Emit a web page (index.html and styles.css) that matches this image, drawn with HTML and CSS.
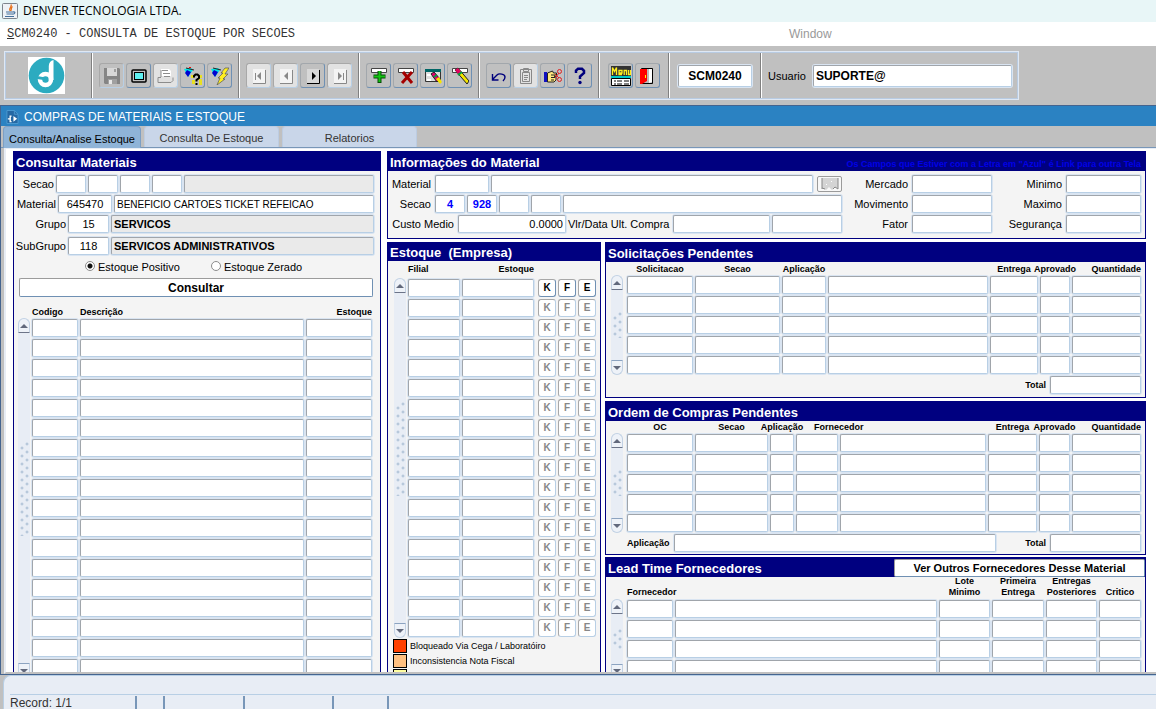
FILE: index.html
```html
<!DOCTYPE html>
<html lang="pt-BR">
<head>
<meta charset="utf-8">
<title>DENVER TECNOLOGIA LTDA.</title>
<link rel="stylesheet" href="styles.css">
<script src="grid.js" defer></script>
</head>
<body>
<header class="titlebar">
  <svg class="java-icon" viewBox="0 0 16 16" aria-hidden="true"><rect x=".5" y=".5" width="15" height="15" rx="1" fill="#eef2f6" stroke="#7d858d"/><path d="M8.800 1.500C11 3.500 6 4.500 8 8M10.500 3.500C8.500 5 10 6 8.800 8" stroke="#e8731c" stroke-width="1.300" fill="none"/><path d="M4 9h7M4.500 11h6M3 13.500h9M11 9c3-.5 2 2-.5 2.200" stroke="#44709c" stroke-width="1.200" fill="none"/></svg>
  <span>DENVER TECNOLOGIA LTDA.</span>
</header>
<nav class="menubar">
  <button class="menu-program"><u>S</u>CM0240 - CONSULTA DE ESTOQUE POR SECOES</button>
  <button class="menu-window" disabled>Window</button>
</nav>

<div class="toolbar">
  <div class="tool-group tool-logo">
    <svg viewBox="0 0 37 37" role="img" aria-label="Denver"><rect width="37" height="37" fill="#fff"/><circle cx="18.500" cy="18.500" r="17.800" fill="#2cabc0"/><circle cx="17.500" cy="22.500" r="5.500" fill="none" stroke="#fff" stroke-width="4.500"/><path d="M25.500 3Q21 4 20.800 9V23h4.700z" fill="#fff"/><path d="M9 19l8.500 1.500-2 2.500-6.500-1z" fill="#2cabc0"/></svg>
  </div>
  <div class="tool-group">
    <button class="tool" aria-label="Salvar" disabled><svg viewBox="0 0 18 18"><path d="M1 1h15l1 1v15H2l-1-1z" fill="#858585"/><path d="M4 1h10v8H4z" fill="#d8d8d8"/><path d="M11 2h2v3h-2zM5 12h9v5H5z" fill="#a0a0a0"/><path d="M6 13h3v4H6z" fill="#e8e8e8"/></svg></button>
    <button class="tool" aria-label="Tela"><svg viewBox="0 0 18 18"><rect x="2" y="3" width="14" height="12" rx="1" fill="#c0c0c0" stroke="#000" stroke-width="1.500"/><rect x="4.500" y="5.500" width="9" height="7" fill="#5ff0f0" stroke="#000"/></svg></button>
    <button class="tool tool--light" aria-label="Imprimir" disabled><svg viewBox="0 0 18 18"><path d="M4 2h8l2 2v5H4z" fill="#fff"/><path d="M5 3.500h6M6 6.500h7M7 9.500h6M2 15.500h12M4 10.500H1v5h13l2-2v-3M4 3v7" fill="none" stroke="#8c8c8c"/><path d="M2 11h11v4H2z" fill="#e0e0e0"/></svg></button>
    <button class="tool" aria-label="Entrar consulta"><svg viewBox="0 0 18 18"><path d="M0 2l7-1 2 2-5 7z" fill="#00e5e5"/><path d="M3 3l4 2-3 5-3-4z" fill="#0000d0"/><path d="M2 1l8 2" stroke="#222"/><path d="M5 0h2v1H5z" fill="red"/><path d="M7 8h3v3H7zM15 8h3v3h-3zM8 13h3v4H8zM15 12h3v6h-3z" fill="#e8e020"/><path d="M10 10.500V9l1.500-1.500h2L15 9v2l-2.500 2v1.500M12.500 16v2" fill="none" stroke="#000" stroke-width="2"/></svg></button>
    <button class="tool" aria-label="Executar consulta"><svg viewBox="0 0 18 18"><path d="M0 2l7-1 2 2-5 7z" fill="#00e5e5"/><path d="M3 3l4 2-3 5-3-4z" fill="#0000d0"/><path d="M2 1l8 2" stroke="#222"/><path d="M14 1h4l-4 6h3l-5 5h2l-8 6 3-7H7l5-5h-2z" fill="#ffee20" stroke="#555" stroke-width=".7"/></svg></button>
  </div>
  <div class="tool-group">
    <button class="tool tool--light" aria-label="Primeiro" disabled><svg viewBox="0 0 18 18"><path d="M3 2h12v14H3z" fill="#f4f4f4"/><path d="M3 16.500h12.500V3M5.500 6v7" fill="none" stroke="#888"/><path d="M11 5v8L7 9z" fill="#888"/></svg></button>
    <button class="tool tool--light" aria-label="Anterior" disabled><svg viewBox="0 0 18 18"><path d="M3 2h12v14H3z" fill="#f4f4f4"/><path d="M3 16.500h12.500V3" fill="none" stroke="#888"/><path d="M11 5v8L7 9z" fill="#888"/></svg></button>
    <button class="tool" aria-label="Seguinte"><svg viewBox="0 0 18 18"><path d="M3 2h12v14H3z" fill="#d8d8d8"/><path d="M3 16.500h12.500V3" fill="none" stroke="#000"/><path d="M8 5v8l4-4z" fill="#000"/></svg></button>
    <button class="tool tool--light" aria-label="Ultimo" disabled><svg viewBox="0 0 18 18"><path d="M3 2h12v14H3z" fill="#f4f4f4"/><path d="M3 16.500h12.500V3M12.500 6v7" fill="none" stroke="#888"/><path d="M7 5v8l4-4z" fill="#888"/></svg></button>
  </div>
  <div class="tool-group">
    <button class="tool" aria-label="Inserir registro"><svg viewBox="0 0 18 18"><path d="M1.500 1.500h15v4h-15z" fill="#fff" stroke="#444"/><path d="M9.500 4v12M3.500 9.500h12" stroke="#074d07" stroke-width="4"/><path d="M9.500 4v11M4 9.500h11" stroke="#12c412" stroke-width="2"/></svg></button>
    <button class="tool" aria-label="Excluir registro"><svg viewBox="0 0 18 18"><path d="M1.500 1.500h15v4h-15z" fill="#fff" stroke="#444"/><path d="M6 5l9 11M15 5L5 16" stroke="#a40000" stroke-width="3"/></svg></button>
    <button class="tool" aria-label="Limpar bloco"><svg viewBox="0 0 18 18"><path d="M1.500 2.500h15v12h-15z" fill="#ddd" stroke="#333"/><path d="M1 2h16v3H1z" fill="#066"/><path d="M3 8h5M3 13h4" stroke="#fff" stroke-width="2"/><path d="M7 7l3-2 6 7-3 3z" fill="#e00070" stroke="#222"/><path d="M12 12l3-2 3 5-2 2z" fill="#f5e500"/><path d="M10 10l3-2" stroke="#00a040" stroke-width="2"/></svg></button>
    <button class="tool" aria-label="Limpar registro"><svg viewBox="0 0 18 18"><path d="M1.500 1.500h15v4h-15z" fill="#fff" stroke="#444"/><path d="M4 3l3-2 11 13-2 3z" fill="#f5e500" stroke="#222"/><path d="M4 3l3-2 3 4-3 2z" fill="#e00060"/><path d="M7 8l4-3" stroke="#00a040" stroke-width="2"/></svg></button>
  </div>
  <div class="tool-group">
    <button class="tool" aria-label="Desfazer"><svg viewBox="0 0 18 18"><path d="M2.500 7v6h6M3 12l4-4c2-2 8-1 8 2 0 2-1 3-2 4" fill="none" stroke="#00007c" stroke-width="1.400"/></svg></button>
    <button class="tool tool--light" aria-label="Colar" disabled><svg viewBox="0 0 18 18"><path d="M3.500 2.500h11v14h-11zM5.500 5.500h7v9h-7zM6.500 1.500h5v3h-5zM7 8.500h4M7 10.500h4M7 12.500h3" fill="none" stroke="#888"/></svg></button>
    <button class="tool" aria-label="Recortar"><svg viewBox="0 0 18 18"><path d="M0 5h3v10H0z" fill="#1010c0"/><path d="M3.500 6l5-2 1 2h3v3H10l2 1v3l-2 2H3.500z" fill="#ffe880" stroke="#222"/><path d="M7 8h4M7 10.500h4M7 13h3" stroke="#222"/><circle cx="15.500" cy="4.500" r="2" fill="none" stroke="#e02020"/><circle cx="15.500" cy="12.500" r="2" fill="none" stroke="#e02020"/><path d="M11 11l4-5M11 7l4 4" stroke="#e02020"/></svg></button>
    <button class="tool" aria-label="Ajuda"><svg viewBox="0 0 18 18"><path d="M5 6V3.500L7 1.800h4l2 2V6L9 9.500V12" fill="none" stroke="#00007c" stroke-width="2.500"/><circle cx="9" cy="15.500" r="1.700" fill="#00007c"/></svg></button>
  </div>
  <div class="tool-group tool-exit">
    <button class="tool tool--menu" aria-label="Menu"><svg viewBox="0 0 20 20"><path d="M0 0h20v10H0z" fill="#333"/><path d="M1.500 9V1.500l2 4 2-4V9M8 7h3V4.500H8v4h3M13.200 9V4.500h2.300V9M17.500 4v4.500h2V4" fill="none" stroke="#ffee20" stroke-width="1.300"/><path d="M0 10h20v2H0z" fill="#00c8c8"/><path d="M.5 12.500h19v7H.5z" fill="#fff" stroke="#000"/><path d="M3 15h2m1 0h5m2 0h5M3 18h2m1 0h5m2 0h5" stroke="#000"/></svg></button>
    <button class="tool" aria-label="Sair"><svg viewBox="0 0 18 18"><path d="M2.500 1.500h11v15h-11z" fill="#bbb" stroke="#000"/><path d="M10 2h3v13l-3 1z" fill="#fff"/><path d="M1 2h7v12l-5 3H1z" fill="red"/><path d="M6 8h1v3H6z" fill="#ff0"/></svg></button>
  </div>
  <div class="tool-group tool-code"><input class="field tool-field tool-program" value="SCM0240" aria-label="Programa"></div>
  <div class="tool-group tool-user"><label for="usuario">Usuario</label><input id="usuario" class="field tool-field tool-username" value="SUPORTE@"></div>
</div>

<main class="window">
  <h1 class="window-title"><svg viewBox="0 0 14 16" aria-hidden="true"><path d="M1 1h8l4 4v10H1z" fill="#2468a4" stroke="#4d9ad2"/><path d="M9 1v4h4" fill="none" stroke="#4d9ad2"/><path d="M6 7H4.500v6H6M2 10h2" stroke="#fff" stroke-width="1.500" fill="none"/><path d="M8 7v6l4-3z" fill="#fff"/></svg>COMPRAS DE MATERIAIS E ESTOQUE</h1>
  <div class="tabs" role="tablist">
    <button class="tab tab--active" role="tab" aria-selected="true">Consulta/Analise Estoque</button>
    <button class="tab" role="tab">Consulta De Estoque</button>
    <button class="tab" role="tab">Relatorios</button>
  </div>
  <div class="workspace">

    <section class="panel search">
      <h2 class="panel-title">Consultar Materiais</h2>
      <form class="search-form">
        <div class="row"><label class="label w-42" for="s1">Secao</label><input id="s1" class="field w-30"><input class="field w-30" aria-label="Secao 2"><input class="field w-30" aria-label="Secao 3"><input class="field w-30" aria-label="Secao 4"><input class="field grow locked" aria-label="Nome da secao" readonly></div>
        <div class="row"><label class="label w-44" for="mat">Material</label><input id="mat" class="field w-54 center" value="645470"><input class="field grow small" aria-label="Nome do material" value="BENEFICIO CARTOES TICKET REFEICAO"></div>
        <div class="row"><label class="label w-54" for="grp">Grupo</label><input id="grp" class="field w-41 center" value="15"><input class="field grow locked" aria-label="Nome do grupo" value="SERVICOS" readonly></div>
        <div class="row row--sub"><label class="label w-54" for="sub">SubGrupo</label><input id="sub" class="field w-41 center" value="118"><input class="field grow locked" aria-label="Nome do subgrupo" value="SERVICOS ADMINISTRATIVOS" readonly></div>
        <div class="choices">
          <label><input type="radio" name="saldo" checked>Estoque Positivo</label>
          <label><input type="radio" name="saldo">Estoque Zerado</label>
        </div>
        <button type="button" class="action consult">Consultar</button>
      </form>
      <div class="listing">
        <div class="scroll"><button aria-label="Subir"></button><i class="grip"></i><button class="down" aria-label="Descer"></button></div>
        <table class="records" data-rows="18">
          <colgroup><col class="w-46"><col><col class="w-66"></colgroup>
          <thead><tr><th class="left">Codigo</th><th class="left">Descrição</th><th class="right">Estoque</th></tr></thead>
          <tbody><tr><td><input class="field" aria-label="Codigo"></td><td><input class="field" aria-label="Descrição"></td><td><input class="field" aria-label="Estoque"></td></tr></tbody>
        </table>
      </div>
    </section>

    <div class="details">
      <section class="panel info">
        <div class="panel-title"><h2>Informações do Material</h2><span class="hint">Os Campos que Estiver com a Letra em "Azul" é Link para outra Tela</span></div>
        <div class="info-body">
          <div class="info-main">
            <div class="row"><label class="label w-47" for="im">Material</label><input id="im" class="field w-54"><input class="field grow" aria-label="Descrição do material"><button class="photo" aria-label="Foto"><svg viewBox="0 0 18 12"><path d="M1 0h16v11l-3-2-3 3-3-3-3 3-4-2z" fill="#d4d4d4"/><path d="M1 0v11M17 0v11l-3-2-2 2M1 10l3 1" fill="none" stroke="#888"/><path d="M10 3h1v1h-1zM5 6h1v1H5z" fill="#fff"/></svg></button></div>
            <div class="row"><label class="label w-47" for="is">Secao</label><input id="is" class="field w-30 link" value="4"><input class="field w-30 link" aria-label="Secao 2" value="928"><input class="field w-30" aria-label="Secao 3"><input class="field w-30" aria-label="Secao 4"><input class="field grow" aria-label="Nome da secao"></div>
            <div class="row"><label class="label w-70" for="cm">Custo Medio</label><input id="cm" class="field w-108 num" value="0.0000"><label class="label w-105" for="vl">Vlr/Data Ult. Compra</label><input id="vl" class="field grow"><input class="field w-70" aria-label="Data da ultima compra"></div>
          </div>
          <div class="info-side">
            <label class="label" for="me">Mercado</label><input id="me" class="field"><label class="label" for="mi">Minimo</label><input id="mi" class="field">
            <label class="label" for="mo">Movimento</label><input id="mo" class="field"><label class="label" for="ma">Maximo</label><input id="ma" class="field">
            <label class="label" for="fa">Fator</label><input id="fa" class="field"><label class="label" for="se">Segurança</label><input id="se" class="field">
          </div>
        </div>
      </section>

      <section class="panel stock">
        <h2 class="panel-title">Estoque&nbsp; (Empresa)</h2>
        <div class="listing">
          <div class="scroll"><button aria-label="Subir"></button><i class="grip"></i><button class="down" aria-label="Descer"></button></div>
          <table class="records" data-rows="18">
            <colgroup><col class="w-52"><col><col class="w-20"><col class="w-18"><col class="w-18"></colgroup>
            <thead><tr><th class="left">Filial</th><th class="right">Estoque</th><th></th><th></th><th></th></tr></thead>
            <tbody><tr><td><input class="field" aria-label="Filial"></td><td><input class="field" aria-label="Estoque"></td><td class="spaced"><button class="key">K</button></td><td><button class="key">F</button></td><td><button class="key">E</button></td></tr></tbody>
          </table>
        </div>
        <ul class="legend">
          <li><i class="swatch red"></i>Bloqueado Via Cega / Laboratóiro</li>
          <li><i class="swatch orange"></i>Inconsistencia Nota Fiscal</li>
          <li><i class="swatch yellow"></i></li>
        </ul>
      </section>

      <div class="pending">
        <section class="panel requests">
          <h2 class="panel-title">Solicitações Pendentes</h2>
          <div class="listing">
            <div class="scroll"><button aria-label="Subir"></button><i class="grip"></i><button class="down" aria-label="Descer"></button></div>
            <table class="records" data-rows="5">
              <colgroup><col class="w-66"><col class="w-85"><col class="w-44"><col><col class="w-48"><col class="w-30"><col class="w-69"></colgroup>
              <thead><tr><th>Solicitacao</th><th>Secao</th><th><span>Aplicação</span></th><th></th><th>Entrega</th><th><span>Aprovado</span></th><th class="right">Quantidade</th></tr></thead>
              <tbody><tr><td><input class="field" aria-label="Solicitacao"></td><td><input class="field" aria-label="Secao"></td><td><input class="field" aria-label="Aplicação"></td><td><input class="field" aria-label="Nome da aplicação"></td><td><input class="field" aria-label="Entrega"></td><td><input class="field" aria-label="Aprovado"></td><td><input class="field" aria-label="Quantidade"></td></tr></tbody>
            </table>
          </div>
          <div class="totals"><label for="t1">Total</label><input id="t1" class="field w-91"></div>
        </section>

        <section class="panel orders">
          <h2 class="panel-title">Ordem de Compras Pendentes</h2>
          <div class="listing">
            <div class="scroll"><button aria-label="Subir"></button><i class="grip"></i><button class="down" aria-label="Descer"></button></div>
            <table class="records" data-rows="5">
              <colgroup><col class="w-66"><col class="w-73"><col class="w-24"><col class="w-42"><col><col class="w-49"><col class="w-31"><col class="w-69"></colgroup>
              <thead><tr><th>OC</th><th>Secao</th><th><span>Aplicação</span></th><th class="left indent" colspan="2">Fornecedor</th><th>Entrega</th><th><span>Aprovado</span></th><th class="right">Quantidade</th></tr></thead>
              <tbody><tr><td><input class="field" aria-label="OC"></td><td><input class="field" aria-label="Secao"></td><td><input class="field" aria-label="Aplicação"></td><td><input class="field" aria-label="Fornecedor"></td><td><input class="field" aria-label="Nome do fornecedor"></td><td><input class="field" aria-label="Entrega"></td><td><input class="field" aria-label="Aprovado"></td><td><input class="field" aria-label="Quantidade"></td></tr></tbody>
            </table>
          </div>
          <div class="totals"><label for="ap">Aplicação</label><input id="ap" class="field grow"><label class="total-label" for="t2">Total</label><input id="t2" class="field w-91"></div>
        </section>

        <section class="panel lead">
          <div class="panel-title"><h2>Lead Time Fornecedores</h2><button class="action others">Ver Outros Fornecedores Desse Material</button></div>
          <div class="listing">
            <div class="scroll"><button aria-label="Subir"></button><i class="grip"></i><button class="down" aria-label="Descer"></button></div>
            <table class="records" data-rows="4">
              <colgroup><col class="w-46"><col><col class="w-51"><col class="w-52"><col class="w-51"><col class="w-42"></colgroup>
              <thead><tr><th class="left" colspan="2">Fornecedor</th><th>Lote<br>Minimo</th><th>Primeira<br>Entrega</th><th><span>Entregas<br>Posteriores</span></th><th>Critico</th></tr></thead>
              <tbody><tr><td><input class="field" aria-label="Fornecedor"></td><td><input class="field" aria-label="Nome do fornecedor"></td><td><input class="field" aria-label="Lote minimo"></td><td><input class="field" aria-label="Primeira entrega"></td><td><input class="field" aria-label="Entregas posteriores"></td><td><input class="field" aria-label="Critico"></td></tr></tbody>
            </table>
          </div>
        </section>
      </div>
    </div>
  </div>
</main>

<footer class="status">
  <div class="status-line"></div>
  <div class="status-cells"><span class="cell w-127">Record: 1/1</span><span class="cell w-28"></span><span class="cell w-80"></span><span class="cell w-89"></span><span class="cell w-55"></span></div>
</footer>
</body>
</html>
```
FILE: styles.css
```css
* { box-sizing: border-box; }

body {
  margin: 0;
  height: 100vh;
  display: flex;
  flex-direction: column;
  overflow: hidden;
  background: #c0c0c0;
  font: 11px/16px "Liberation Sans", Arial, sans-serif;
  color: #000;
}

h1, h2, ul { margin: 0; padding: 0; font: inherit; list-style: none; }
button, input { font: inherit; color: inherit; margin: 0; padding: 0; border-radius: 0; }
svg { display: block; }

/* Column and field widths */
.w-18 { width: 18px; }
.w-20 { width: 20px; }
.w-24 { width: 24px; }
.w-28 { width: 28px; }
.w-30 { width: 30px; }
.w-31 { width: 31px; }
.w-41 { width: 41px; }
.w-42 { width: 42px; }
.w-44 { width: 44px; }
.w-46 { width: 46px; }
.w-47 { width: 47px; }
.w-48 { width: 48px; }
.w-49 { width: 49px; }
.w-51 { width: 51px; }
.w-52 { width: 52px; }
.w-54 { width: 54px; }
.w-55 { width: 55px; }
.w-66 { width: 66px; }
.w-69 { width: 69px; }
.w-70 { width: 70px; }
.w-73 { width: 73px; }
.w-80 { width: 80px; }
.w-85 { width: 85px; }
.w-89 { width: 89px; }
.w-91 { width: 91px; }
.w-105 { width: 105px; }
.w-108 { width: 108px; }
.w-127 { width: 127px; }

/* Title and menu */
.titlebar {
  flex: none;
  height: 22px;
  display: flex;
  align-items: center;
  gap: 5px;
  padding-left: 2px;
  background: #e8f6f7;
  font: 12px/20px "Open Sans", "Noto Sans", sans-serif;
}
.java-icon { width: 16px; height: 16px; }
.menubar { flex: none; height: 24px; display: flex; background: #fff; }
.menubar button { border: 0; background: none; text-align: left; white-space: nowrap; }
.menu-program { flex: 0 1 789px; padding-left: 7px; font: 12px "Liberation Mono", monospace; color: #333; }
.menu-window { font-size: 12px; color: #999; }

/* Toolbar */
.toolbar {
  flex: none;
  align-self: flex-start;
  display: flex;
  height: 49px;
  margin: 5px 0 5px 4px;
  border: 1px solid #dfe8f4;
  outline: 1px solid #b8cbe2;
  outline-offset: -2px;
}
.tool-group {
  display: flex;
  align-items: center;
  gap: 2px;
  padding: 0 6px;
  border-left: 1px solid #fff;
  border-right: 1px solid #808080;
}
.tool-logo { width: 87px; justify-content: center; padding: 0 6px 0 2px; }
.tool-logo svg { width: 37px; height: 37px; }
.tool {
  width: 25px;
  height: 25px;
  display: grid;
  place-items: center;
  background: #c0c0c0;
  border: 1px solid #a2a7ac;
  border-right-color: #6f90b3;
  border-bottom-color: #6f90b3;
  border-radius: 3px;
}
.tool:disabled { border-color: #a8a8a8 #b8cfe5 #b8cfe5 #a8a8a8; }
.tool--light { background: #e2e2e2; }
.tool svg { width: 18px; height: 18px; }
.tool--menu svg { width: 20px; height: 20px; }
.tool-exit, .tool-code { padding: 0 8px; }
.tool-user { border-right: 0; gap: 7px; }

/* Fields */
.field {
  display: block;
  flex: none;
  min-width: 0;
  height: 18px;
  padding: 0 2px;
  background: #fff;
  border: 1px solid;
  border-color: #a0a5ab #b8cfe5 #b8cfe5 #a0a5ab;
  border-radius: 2px;
  box-shadow: 0 0 0 1px #d9e4f1;
}
.grow { flex: 1 1 0; }
.locked { background: #eaeaea; font-weight: bold; }
.small { font-size: 10px; }
.center, .link { text-align: center; }
.link { color: #0000ff; font-weight: bold; }
.num { text-align: right; }
.tool-field { height: 22px; font-size: 12px; font-weight: bold; }
.tool-program { width: 74px; text-align: center; }
.tool-username { width: 199px; }

/* Window */
.window {
  flex: 1;
  min-height: 0;
  display: flex;
  flex-direction: column;
  border: solid;
  border-width: 1px 0 1px 1px;
  border-color: #44648f;
}
.window-title {
  flex: none;
  height: 20px;
  display: flex;
  align-items: center;
  gap: 5px;
  padding: 1px 0 0 5px;
  background: #2b82c2;
  color: #fff;
  font-size: 12px;
}
.window-title svg { width: 13px; height: 16px; }
.tabs { flex: none; display: flex; gap: 3px; height: 22px; padding-left: 2px; box-shadow: inset 0 -1px #7896b8; }
.tab {
  width: 135px;
  height: 21px;
  padding: 2px 0 0;
  border: 1px solid #bccce2;
  border-bottom: 0;
  border-radius: 4px 4px 0 0;
  background: #c9d6e9;
  color: #333;
}
.tab--active { width: 138px; height: 22px; background: #8fb4d8; border-color: #7d9fc4; color: #000; }

.workspace {
  flex: 1;
  min-height: 0;
  overflow: hidden;
  display: grid;
  grid-template-columns: minmax(0, 368fr) minmax(0, 759fr);
  grid-template-rows: minmax(0, 1fr);
  gap: 6px;
  margin-left: 3px;
  padding: 2px 10px 0 7px;
  background: #fff;
  border-left: 2px solid #e8edf5;
  border-top: 1px solid #e8edf5;
  border-bottom: 2px solid #c0c0c0;
}
.details {
  display: grid;
  grid-template-columns: minmax(0, 214fr) minmax(0, 541fr);
  grid-template-rows: 88px minmax(0, 1fr);
  gap: 3px 4px;
  min-height: 0;
}
.info { grid-column: 1 / -1; }
.pending { display: flex; flex-direction: column; gap: 3px; min-height: 0; }

.panel { background: #f4f4f4; border: 1px solid #000080; overflow: hidden; }
.search, .stock, .lead { border-bottom: 0; }
.panel-title {
  display: flex;
  justify-content: space-between;
  align-items: center;
  height: 19px;
  padding: 2px 0 0 2px;
  background: #000080;
  color: #fff;
  font-size: 13px;
  font-weight: bold;
}
.hint { margin-right: 4px; padding-top: 2px; font-size: 9px; color: #0000e6; white-space: nowrap; }

.row { display: flex; align-items: center; gap: 2px; }
.label { flex: none; padding-right: 4px; text-align: right; white-space: nowrap; }
.search-form { display: flex; flex-direction: column; gap: 2px; padding: 4px 6px 0 0; }
.search-form .label { padding-right: 2px; margin-right: -2px; }
.row--sub { margin-top: 2px; }
.choices { display: flex; gap: 31px; height: 19px; padding: 1px 0 0 71px; }
.choices label { display: flex; align-items: center; gap: 3px; }
.choices input {
  appearance: none;
  width: 10px;
  height: 10px;
  margin-bottom: 3px;
  border: 1px solid #8c8c8c;
  border-radius: 50%;
  background: #fff;
}
.choices input:checked { background: radial-gradient(circle, #111 2px, #fff 3px); }
.action {
  background: #fff;
  border: 1px solid;
  border-color: #9b9b9b #6f90b3 #6f90b3 #9b9b9b;
  border-radius: 2px;
  font-weight: bold;
  color: #000;
}
.consult { height: 19px; margin: 0 1px 0 5px; font-size: 12px; line-height: 16px; }
.others { width: 251px; height: 18px; margin-top: -2px; font-size: 11px; line-height: 16px; white-space: nowrap; }

.info-body { display: flex; padding: 4px 4px 0 0; }
.info-main { flex: 1; min-width: 0; display: flex; flex-direction: column; gap: 2px; }
.info-main .label { margin-right: -2px; }
.info-side { display: grid; grid-template-columns: 70px 80px 74px 75px; grid-auto-rows: 18px; gap: 2px 0; align-items: center; }
.info-side .field { width: 100%; }
.photo { width: 25px; height: 16px; margin-left: 2px; display: grid; place-items: center; border: 1px solid #9b9b9b; border-radius: 2px; background: #f8f8f8; }
.photo svg { width: 18px; height: 12px; }

/* Record listings */
.listing { --head: 10px; display: flex; }
.records { flex: 1; min-width: 0; width: 0; table-layout: fixed; border-spacing: 2px; }
.records th {
  height: var(--head);
  padding: 0;
  vertical-align: bottom;
  font-size: 9px;
  line-height: 10px;
  white-space: nowrap;
}
.records th span { display: flex; justify-content: center; margin: 0 -10px; text-align: center; }
.records th.left { text-align: left; }
.records th.right { text-align: right; }
.records th.indent { padding-left: 18px; }
.records td { height: 18px; padding: 0; }
.records td.spaced { padding-left: 2px; }
.records .field { width: 100%; }
.key {
  display: block;
  width: 100%;
  height: 18px;
  background: #fff;
  border: 1px solid #a8a8a8;
  border-right-color: #b8cfe5;
  border-bottom-color: #b8cfe5;
  border-radius: 3px;
  color: #888;
  font-size: 10px;
  font-weight: bold;
  line-height: 14px;
}
tr:first-child .key { color: #000; border-right-color: #6f90b3; border-bottom-color: #6f90b3; }

.scroll {
  flex: none;
  width: 12px;
  display: flex;
  flex-direction: column;
  align-items: center;
  justify-content: space-between;
  margin: calc(var(--head) + 3px) 0 1px;
  background: #e8edf5;
  border-radius: 6px;
}
.scroll button {
  width: 12px;
  height: 15px;
  display: grid;
  place-items: center;
  background: #eef2f8;
  border: 1px solid #c3d2e4;
  border-bottom-color: #6c7488;
  border-radius: 6px 6px 0 0;
}
.scroll button::before { content: ""; border: 4px solid transparent; border-top: 0; border-bottom: 4px solid #62697c; }
.scroll .down { border-color: #8ca3c0 #c3d2e4 #c3d2e4; border-radius: 0 0 6px 6px; }
.scroll .down::before { border-top: 4px solid #62697c; border-bottom: 0; }
.grip {
  width: 12px;
  height: 26%;
  background:
    radial-gradient(circle at 9px 2px, #9db4ce 0, transparent 2px),
    radial-gradient(circle at 4px 6px, #9db4ce 0, transparent 2px);
  background-size: 12px 8px;
}

.search .listing { --head: 12px; padding: 6px 6px 0 4px; }
.stock .panel-title { height: 18px; }
.stock .listing { --head: 13px; padding: 1px 2px 0 6px; }
.search .grip, .stock .grip { margin-bottom: 18px; }
.stock th { vertical-align: top; }
.pending .listing { padding: 0 2px 0 5px; gap: 2px; }
.pending .panel { flex: none; }
.orders .listing { --head: 9px; }
.orders th { line-height: 9px; }
.lead .listing { --head: 22px; margin-top: -3px; }
.lead { margin-top: -1px; }
.pending .lead { flex: 1 0 auto; }
.lead th { line-height: 11px; }

.totals { display: flex; align-items: center; justify-content: flex-end; gap: 4px; height: 18px; margin: 0 4px 3px 21px; font-size: 9px; font-weight: bold; }
.orders .totals { margin-bottom: 2px; }
.total-label { margin-left: 25px; }

.legend { padding: 0 0 0 5px; margin-top: -1px; font-size: 9px; }
.legend li { display: flex; align-items: center; gap: 3px; height: 15px; }
.swatch { width: 14px; height: 14px; border: 1px solid #000; }
.red { background: #ff4000; }
.orange { background: #ffc080; }
.yellow { background: #ffffa0; }

/* Status bar */
.status {
  flex: none;
  height: 34px;
  margin-left: 3px;
  padding-left: 6px;
  background: #e8edf5;
  border: 1px solid #b8cfe5;
  border-width: 1px 0 0 1px;
  border-radius: 8px 0 0 0;
  overflow: hidden;
}
.status-line { height: 19px; border-bottom: 1px solid #b8cfe5; }
.status-cells { display: flex; padding-top: 1px; }
.cell { height: 13px; border-right: 2px solid #7896b8; font-size: 12px; line-height: 14px; color: #333; white-space: nowrap; }
```
FILE: grid.js
```javascript
// Fills each listing with blank records, using its first row as the model.
document.querySelectorAll("table[data-rows]").forEach(function (table) {
  var body = table.tBodies[0];
  var model = body.rows[0];
  for (var i = 1; i < Number(table.dataset.rows); i++) {
    var row = model.cloneNode(true);
    row.querySelectorAll("button").forEach(function (b) { b.disabled = true; });
    body.appendChild(row);
  }
});
```
